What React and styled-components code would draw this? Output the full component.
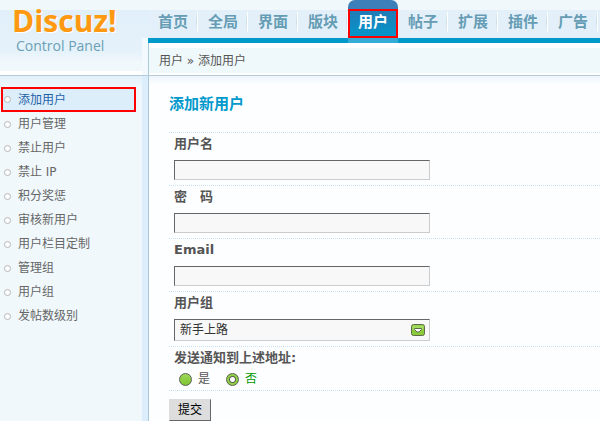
import { useState } from "react";
import styled, { createGlobalStyle } from "styled-components";

const navItems = ["首页", "全局", "界面", "版块", "用户", "帖子", "扩展", "插件", "广告"];

const menuItems = [
  "添加用户",
  "用户管理",
  "禁止用户",
  "禁止 IP",
  "积分奖惩",
  "审核新用户",
  "用户栏目定制",
  "管理组",
  "用户组",
  "发帖数级别",
];

const App = () => {
  const [notify, setNotify] = useState("no");

  return (
    <>
      <GlobalStyle />
      <Page>
        <Header>
          <Brand>
            <Logo>Discuz!</Logo>
            <SubLogo>Control Panel</SubLogo>
          </Brand>
          <TopRight>
            <Nav>
              {navItems.map((item) => (
                <NavLink key={item} href="#" $active={item === "用户"}>
                  <span>{item}</span>
                </NavLink>
              ))}
            </Nav>
            <Crumbs>用户 » 添加用户</Crumbs>
          </TopRight>
        </Header>
        <Body>
          <Sidebar>
            {menuItems.map((item) => (
              <MenuLink key={item} href="#" $active={item === "添加用户"}>
                <Bullet />
                {item}
              </MenuLink>
            ))}
          </Sidebar>
          <Content>
            <Title>添加新用户</Title>
            <form onSubmit={(e) => e.preventDefault()}>
              <Row>
                <Label htmlFor="username">用户名</Label>
                <Input id="username" type="text" />
              </Row>
              <Row>
                <Label htmlFor="password">密　码</Label>
                <Input id="password" type="password" />
              </Row>
              <Row>
                <Label htmlFor="email">Email</Label>
                <Input id="email" type="text" />
              </Row>
              <Row>
                <Label htmlFor="group">用户组</Label>
                <SelectBox>
                  <Select id="group">
                    <option>新手上路</option>
                  </Select>
                  <Arrow viewBox="0 0 14 12" aria-hidden="true">
                    <rect x="0.5" y="0.5" width="13" height="11" rx="2" fill="#8acb3c" stroke="#5d6b4c" />
                    <rect x="1.5" y="1.5" width="11" height="4" fill="#a3dc60" />
                    <path d="M3.5 4.5h7v1L8 8H6L3.5 5.5z" fill="#fff" stroke="#5d6b4c" />
                  </Arrow>
                </SelectBox>
              </Row>
              <RadioRow>
                <Legend>发送通知到上述地址:</Legend>
                <Options>
                  <Option>
                    <Radio
                      type="radio"
                      name="notify"
                      checked={notify === "yes"}
                      onChange={() => setNotify("yes")}
                    />
                    <span>是</span>
                  </Option>
                  <Option>
                    <Radio
                      type="radio"
                      name="notify"
                      checked={notify === "no"}
                      onChange={() => setNotify("no")}
                    />
                    <span>否</span>
                  </Option>
                </Options>
              </RadioRow>
              <Submit type="submit">提交</Submit>
            </form>
          </Content>
        </Body>
      </Page>
    </>
  );
};

export default App;

const GlobalStyle = createGlobalStyle`
  * {
    box-sizing: border-box;
  }
  body {
    margin: 0;
    background: #fdfeff;
    color: #555;
    font: 12px/24px "DejaVu Sans", "Noto Sans CJK SC", sans-serif;
  }
  input, select, button {
    font: inherit;
  }
`;

const Page = styled.div`
  min-height: 100vh;
  display: flex;
  flex-direction: column;
`;

const Header = styled.header`
  display: grid;
  grid-template-columns: 148px minmax(0, 1fr);
  height: 76px;
  border-bottom: 1px solid #b5cbd9;
`;

const Brand = styled.div`
  padding: 4px 0 0 12px;
  background:
    linear-gradient(transparent 38px, #f3fafd 38px) right / 6px 100% no-repeat,
    linear-gradient(#f0f8fb 10px, #e0effa 10px, #e6f2fa 52px, #f0f8fb 62px, #f0f8fb 71px, #fff 71px);
`;

const Logo = styled.div`
  color: #ff9912;
  font: bold 30px/33px "Open Sans", sans-serif;
  text-shadow: 1px 1px 0 #fff;
`;

const SubLogo = styled.div`
  padding-left: 4px;
  color: #6a9fb5;
  font: 14px/17px "Open Sans", sans-serif;
`;

const TopRight = styled.div`
  min-width: 0;
`;

const Nav = styled.nav`
  display: flex;
  height: 43px;
  overflow: hidden;
  background: linear-gradient(#f0f8fb 10px, #e3f0fa 10px, #e3f0fa 38px, #0099cc 38px);
`;

const NavLink = styled.a`
  flex: 0 0 50px;
  height: 43px;
  padding-top: 9px;
  border-radius: ${({ $active }) => ($active ? "7px 7px 0 0" : "0")};
  background: ${({ $active }) =>
    $active
      ? "linear-gradient(#3d7fb8 9px, #2579b5 9px, #0099cc 38px, #35abd8 38px)"
      : "linear-gradient(#e3f0fa, #cbdfe8, #e3f0fa) 48px 12px / 1px 20px no-repeat, linear-gradient(#fff, #fff) 49px 12px / 1px 20px no-repeat"};
  color: ${({ $active }) => ($active ? "#fff" : "#669db4")};
  font-size: 15px;
  font-weight: bold;
  text-align: center;
  text-decoration: none;

  span {
    display: block;
    height: 29px;
    line-height: 23px;
    border: 2px solid ${({ $active }) => ($active ? "#f00" : "transparent")};
  }
`;

const Crumbs = styled.div`
  height: 32px;
  padding: 5px 0 0 10px;
  border-left: 1px solid #a9cbd9;
  line-height: 26px;
  background: linear-gradient(#fff 5px, #eff8fb 5px, #eff8fb 30px, #fff 30px);
`;

const Body = styled.div`
  flex: 1;
  display: grid;
  grid-template-columns: 149px minmax(0, 1fr);
`;

const Sidebar = styled.nav`
  padding-top: 11px;
  border-right: 1px solid #a9cbd9;
  background:
    linear-gradient(#dceefb, #dceefb) right / 6px 100% no-repeat,
    linear-gradient(#e3f0fa, #f0f8fc 12px);
`;

const MenuLink = styled.a`
  display: flex;
  align-items: center;
  gap: 7px;
  height: ${({ $active }) => ($active ? "25px" : "24px")};
  margin: 0 12px 0 1px;
  padding-left: ${({ $active }) => ($active ? "1px" : "3px")};
  border: ${({ $active }) => ($active ? "2px solid #f00" : "0")};
  background: ${({ $active }) => ($active ? "#ddeefb" : "none")};
  color: ${({ $active }) => ($active ? "#1d62a8" : "#666")};
  line-height: 26px;
  text-decoration: none;
  white-space: nowrap;
`;

const Bullet = styled.span`
  width: 7px;
  height: 7px;
  border: 1px solid #b5b5b5;
  border-radius: 50%;
  background: #fff;
`;

const Content = styled.main`
  padding: 16px 0 0 20px;
  background: linear-gradient(#edf6fb, #fdfeff 9px);
`;

const Title = styled.h1`
  margin: 0;
  height: 40px;
  color: #0099cc;
  font-size: 15px;
  line-height: 24px;
`;

const Row = styled.div`
  padding: 0 5px 5px;
  border-top: 1px dotted #c9e1f0;
`;

const Label = styled.label`
  display: block;
  margin-bottom: 5px;
  font-size: 13px;
  font-weight: bold;
  line-height: 22px;
`;

const Input = styled.input`
  display: block;
  width: 256px;
  max-width: 100%;
  height: 20px;
  padding: 0 5px;
  border: 1px solid;
  border-color: #666 #ccc #ccc #666;
  border-radius: 0;
  background: #f8f8f8;
  color: #333;
`;

const SelectBox = styled.div`
  position: relative;
  width: 256px;
  max-width: 100%;
`;

const Select = styled(Input).attrs({ as: "select" })`
  width: 100%;
  height: 22px;
  appearance: none;
  line-height: 20px;
`;

const Arrow = styled.svg`
  position: absolute;
  top: 5px;
  right: 5px;
  width: 14px;
  height: 12px;
  pointer-events: none;
`;

const RadioRow = styled.fieldset`
  margin: 0;
  padding: 0 5px;
  border: 0;
  border-top: 1px dotted #c9e1f0;
  border-bottom: 1px dotted #c9e1f0;
`;

const Legend = styled.legend`
  float: left;
  width: 100%;
  padding: 0;
  font-size: 13px;
  font-weight: bold;
  line-height: 22px;
`;

const Options = styled.div`
  clear: both;
  display: flex;
  gap: 16px;
  height: 21px;
  padding-left: 5px;
`;

const Option = styled.label`
  display: flex;
  align-items: center;
  gap: 6px;
  line-height: 23px;

  input:checked + span {
    color: #090;
  }
`;

const Radio = styled.input`
  appearance: none;
  width: 13px;
  height: 13px;
  margin: 0;
  border: 1px solid #5a5f52;
  border-radius: 50%;
  background: linear-gradient(#9dd85a, #7fc52f);

  &:checked {
    background: radial-gradient(circle, #fff 2px, #5a5f52 3px, #8fcf45 4px);
  }
`;

const Submit = styled.button`
  display: block;
  margin-top: 8px;
  height: 22px;
  padding: 0 8px;
  border: 1px solid;
  border-color: #ddd #666 #666 #ddd;
  background: #ddd;
  color: #000;
  line-height: 20px;
`;
